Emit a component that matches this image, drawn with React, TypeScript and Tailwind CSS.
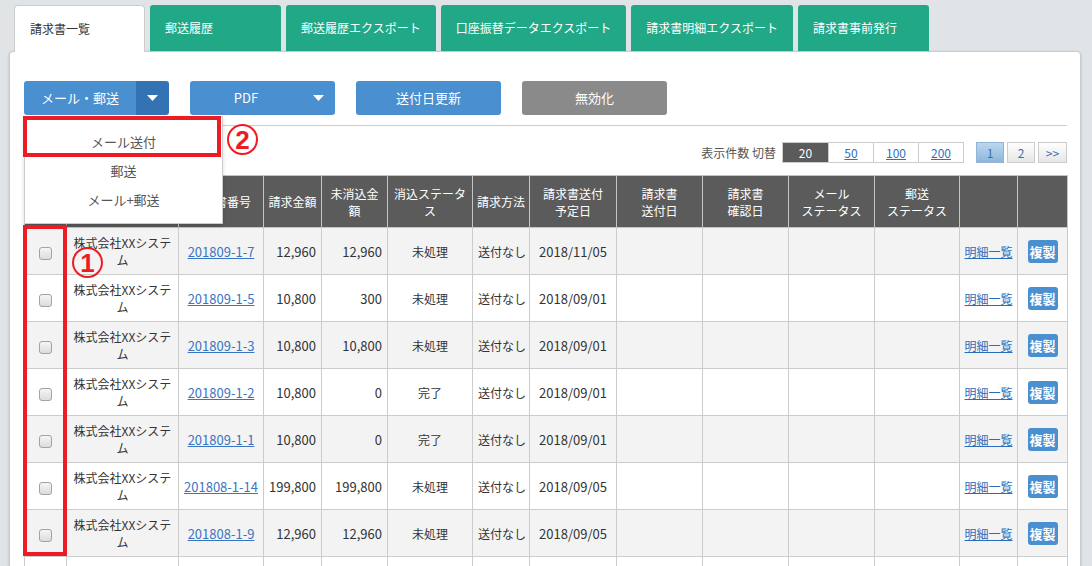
import React from 'react';

const tabs = [
  { label: '請求書一覧', active: true },
  { label: '郵送履歴' },
  { label: '郵送履歴エクスポート' },
  { label: '口座振替データエクスポート' },
  { label: '請求書明細エクスポート' },
  { label: '請求書事前発行' },
];

const colWidths = [42, 112, 85, 58, 66, 85, 57, 87, 86, 86, 86, 85, 58, 50];

const headers: string[][] = [
  [],
  ['請求先'],
  ['請求書番号'],
  ['請求金額'],
  ['未消込金', '額'],
  ['消込ステータ', 'ス'],
  ['請求方法'],
  ['請求書送付', '予定日'],
  ['請求書', '送付日'],
  ['請求書', '確認日'],
  ['メール', 'ステータス'],
  ['郵送', 'ステータス'],
  [],
  [],
];

const rows = [
  { no: '201809-1-7', amount: '12,960', rest: '12,960', status: '未処理', date: '2018/11/05' },
  { no: '201809-1-5', amount: '10,800', rest: '300', status: '未処理', date: '2018/09/01' },
  { no: '201809-1-3', amount: '10,800', rest: '10,800', status: '未処理', date: '2018/09/01' },
  { no: '201809-1-2', amount: '10,800', rest: '0', status: '完了', date: '2018/09/01' },
  { no: '201809-1-1', amount: '10,800', rest: '0', status: '完了', date: '2018/09/01' },
  { no: '201808-1-14', amount: '199,800', rest: '199,800', status: '未処理', date: '2018/09/05' },
  { no: '201808-1-9', amount: '12,960', rest: '12,960', status: '未処理', date: '2018/09/05' },
  { no: '201808-1-8', amount: '12,960', rest: '12,960', status: '未処理', date: '2018/09/05' },
];

const Caret = () => (
  <svg width="11" height="6" viewBox="0 0 11 6" className="shrink-0">
    <path d="M0 0 L11 0 L5.5 6 Z" fill="#ffffff" />
  </svg>
);

const Checkbox = () => (
  <span className="inline-block w-[13px] h-[13px] rounded-[3px] border border-[#a3a3a3] bg-linear-to-b from-[#f5f5f5] to-[#dcdcdc] align-middle" />
);

const Badge = ({ n }: { n: string }) => (
  <div className="absolute z-30 w-[31px] h-[31px] rounded-full border-2 border-[#ec1c24] flex items-center justify-center text-[#ec1c24] text-[26px] font-bold leading-none font-['Liberation_Sans',Arial,sans-serif]">
    {n}
  </div>
);

const cell = 'border border-[#cccccc] px-[5px]';

export default function App() {
  return (
    <div className="h-screen overflow-hidden bg-[#e1e4e7] pl-[9px] pr-[11px] pt-[5px] text-[#333] font-['Noto_Sans_CJK_JP','Noto_Sans',sans-serif]">
      {/* tabs */}
      <div className="flex items-end gap-[5px] pl-[5px]">
        {tabs.map((t) =>
          t.active ? (
            <div
              key={t.label}
              className="relative z-10 -mb-px h-[47px] min-w-[131px] px-[15px] flex items-center bg-white border border-b-0 border-[#cccccc] rounded-t-[4px] text-[12px] text-[#333]"
            >
              {t.label}
            </div>
          ) : (
            <div
              key={t.label}
              className="h-[46px] min-w-[131px] px-[15px] flex items-center bg-[#21a887] rounded-t-[3px] text-[12px] text-white"
            >
              {t.label}
            </div>
          )
        )}
      </div>

      {/* panel */}
      <div className="relative bg-white border border-[#cccccc] rounded-[4px] shadow-[0_1px_3px_rgba(0,0,0,0.18)] pl-[14px] pr-[13px] pt-[29px] h-[620px]">
        {/* action buttons */}
        <div className="relative">
          <div className="flex gap-[21px] text-[13px] text-white">
            <div className="flex w-[145px] h-[34px] rounded-[3px] overflow-hidden">
              <div className="flex-1 bg-[#4a8fd0] flex items-center justify-center">メール・郵送</div>
              <div className="w-[33px] bg-[#3373b3] flex items-center justify-center">
                <Caret />
              </div>
            </div>
            <div className="flex w-[145px] h-[34px] rounded-[3px] bg-[#4a8fd0]">
              <span className="flex-1 flex items-center justify-center">PDF</span>
              <span className="w-[33px] flex items-center justify-center">
                <Caret />
              </span>
            </div>
            <div className="flex w-[145px] h-[34px] rounded-[3px] bg-[#4a8fd0] items-center justify-center">送付日更新</div>
            <div className="flex w-[145px] h-[34px] rounded-[3px] bg-[#8a8a8a] items-center justify-center">無効化</div>
          </div>

          {/* dropdown */}
          <div className="absolute left-0 top-[35px] z-20 w-[199px] bg-white border border-[#cccccc] shadow-[0_2px_4px_rgba(0,0,0,0.15)] pt-[10px] pb-[9px] text-[13px] text-[#555]">
            <div className="h-[29px] flex items-center justify-center">メール送付</div>
            <div className="h-[29px] flex items-center justify-center">郵送</div>
            <div className="h-[29px] flex items-center justify-center">メール+郵送</div>
          </div>
          <div className="absolute -left-[1px] top-[35px] z-30 w-[198px] h-[41px] border-4 border-[#ec1c24]" />
          <div className="absolute left-[203px] top-[43px]">
            <Badge n="2" />
          </div>
        </div>

        <div className="mt-[10px] border-t border-[#cccccc]" />

        {/* paging row */}
        <div className="mt-[16px] flex justify-end items-center h-[21px] text-[12px]">
          <span className="text-[#555] mr-[6px]">表示件数 切替</span>
          <div className="flex h-[21px] border border-[#cccccc]">
            <span className="w-[45px] flex items-center justify-center bg-[#5b5b5b] text-white">20</span>
            {['50', '100', '200'].map((n) => (
              <span key={n} className="w-[45px] flex items-center justify-center border-l border-[#cccccc] text-[#2f6fbf] underline">
                {n}
              </span>
            ))}
          </div>
          <div className="flex gap-[3px] ml-[12px]">
            <span className="w-[28px] h-[21px] flex items-center justify-center border border-[#94b4d3] bg-linear-to-b from-[#bcd7ee] to-[#8db7dc] text-[#3b6fb0]">1</span>
            <span className="w-[28px] h-[21px] flex items-center justify-center border border-[#cccccc] bg-linear-to-b from-white to-[#e6e6e6] text-[#3b6fb0]">2</span>
            <span className="w-[29px] h-[21px] flex items-center justify-center border border-[#cccccc] bg-linear-to-b from-white to-[#e6e6e6] text-[#3b6fb0]">&gt;&gt;</span>
          </div>
        </div>

        {/* table */}
        <div className="relative mt-[12px]">
          <table className="table-fixed border-collapse w-[1043px] text-[12px] leading-[17px]">
            <colgroup>
              {colWidths.map((w, i) => (
                <col key={i} style={{ width: w }} />
              ))}
            </colgroup>
            <thead>
              <tr className="h-[52px] bg-[#5b5b5b] text-white">
                {headers.map((h, i) => (
                  <th key={i} className="border border-[#c4c4c4] px-[3px] font-normal text-center whitespace-nowrap">
                    {i === 0 ? (
                      <Checkbox />
                    ) : (
                      h.map((line, j) => <div key={j}>{line}</div>)
                    )}
                  </th>
                ))}
              </tr>
            </thead>
            <tbody>
              {rows.map((r, i) => (
                <tr key={i} className={`h-[47px] ${i % 2 === 0 ? 'bg-[#f3f3f3]' : 'bg-white'}`}>
                  <td className={`${cell} text-center`}>
                    <Checkbox />
                  </td>
                  <td className={`${cell} text-center`}>株式会社XXシステム</td>
                  <td className={`${cell} text-center text-[13px] whitespace-nowrap px-[2px]`}>
                    <span className="text-[#3a75c4] underline">{r.no}</span>
                  </td>
                  <td className={`${cell} text-right text-[13px]`}>{r.amount}</td>
                  <td className={`${cell} text-right text-[13px]`}>{r.rest}</td>
                  <td className={`${cell} text-center`}>{r.status}</td>
                  <td className={`${cell} text-center whitespace-nowrap`}>送付なし</td>
                  <td className={`${cell} text-center text-[13px]`}>{r.date}</td>
                  <td className={cell} />
                  <td className={cell} />
                  <td className={cell} />
                  <td className={cell} />
                  <td className="border border-[#cccccc] px-[2px] text-center whitespace-nowrap">
                    <span className="text-[#2a6ebb] underline">明細一覧</span>
                  </td>
                  <td className={`${cell} text-center`}>
                    <span className="inline-flex items-center justify-center w-[30px] h-[23px] rounded-[3px] bg-[#4a8fd0] text-white text-[13px] font-bold">
                      複製
                    </span>
                  </td>
                </tr>
              ))}
            </tbody>
          </table>

          {/* annotation 1 */}
          <div className="absolute -left-[1px] top-[50px] z-30 w-[44px] h-[331px] border-4 border-[#ec1c24]" />
          <div className="absolute left-[48px] top-[72px]">
            <Badge n="1" />
          </div>
        </div>
      </div>
    </div>
  );
}
